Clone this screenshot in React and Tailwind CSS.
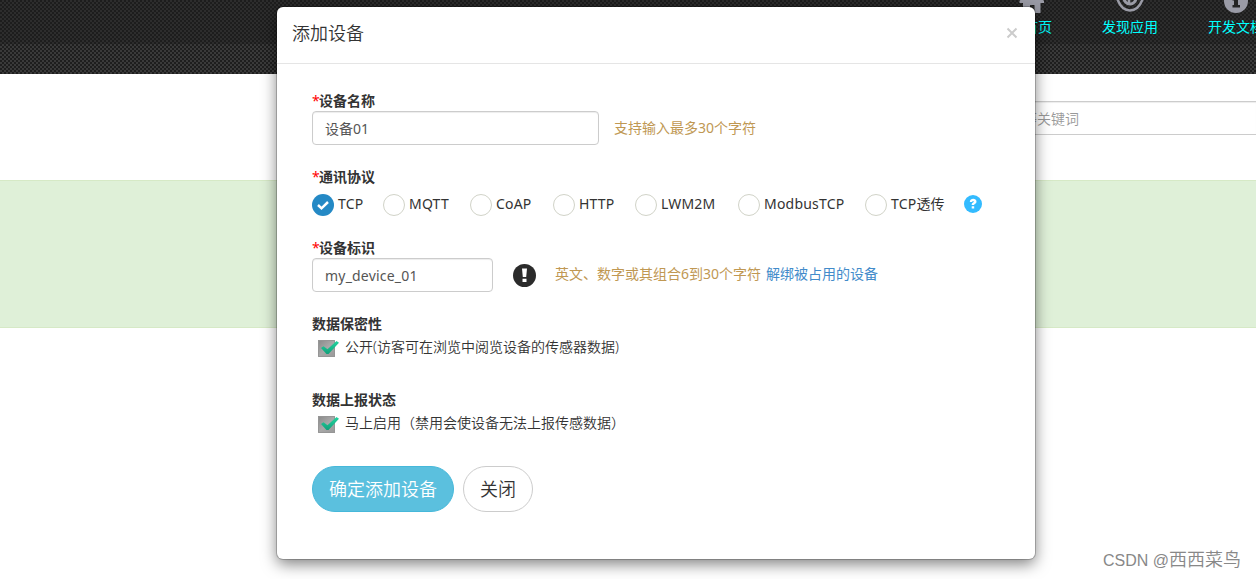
import React from "react";

const protocols = [
  { name: "TCP", width: "w-[71px]", checked: true },
  { name: "MQTT", width: "w-[87px]" },
  { name: "CoAP", width: "w-[83px]" },
  { name: "HTTP", width: "w-[82px]" },
  { name: "LWM2M", width: "w-[103px]" },
  { name: "ModbusTCP", width: "w-[127px]" },
  { name: "TCP透传", width: "w-[99px]" },
];

function HomeIcon() {
  return (
    <svg className="relative left-[8px]" width="28" height="28" viewBox="0 0 28 28" fill="#9a9ba6">
      <path d="M14 2 26 16v2H22.500V28H16.500V20H12V28H5V18H1.500v-2Z" />
    </svg>
  );
}

function EyeIcon() {
  return (
    <svg width="28" height="28" viewBox="0 0 28 28" fill="none" stroke="#9a9ba6">
      <path d="M1.500 14.500C6 5 22 5 26.500 14.500C21 29 7 29 1.500 14.500Z" strokeWidth="2.500" />
      <path d="M8 13a6 6 0 0 0 12 0" strokeWidth="3" />
      <path d="M13 14v4" strokeWidth="2.500" />
    </svg>
  );
}

function InfoIcon() {
  return (
    <svg width="24" height="28" viewBox="0 0 24 28">
      <circle cx="12" cy="16" r="12" fill="#9a9ba6" />
      <path d="M10 8h4v3h-4zM8.500 13H14v7h2v2.500H8.500V20H10v-4.500H8.500z" fill="#242424" />
    </svg>
  );
}

function NavItem({ icon, label }) {
  return (
    <div className="flex w-[106px] shrink-0 flex-col items-center">
      <div className="-mt-[15px] h-[32px]">{icon}</div>
      <span className="whitespace-nowrap font-normal leading-5 text-[#00ffff]">{label}</span>
    </div>
  );
}

function Label({ required, children }) {
  return (
    <div className="flex h-5 text-sm font-bold leading-5 text-[#333]">
      {required && <span className="w-[7px] font-normal text-[#f00]">*</span>}
      <span>{children}</span>
    </div>
  );
}

function Radio({ name, width, checked }) {
  return (
    <label className={`flex h-[22px] shrink-0 items-center ${width}`}>
      {checked ? (
        <svg className="shrink-0" width="22" height="22" viewBox="0 0 22 22">
          <circle cx="11" cy="11" r="11" fill="#2489c5" />
          <path d="m6 11 3.500 3.300L16 8" fill="none" stroke="#fff" strokeWidth="2.500" />
        </svg>
      ) : (
        <span className="size-[22px] shrink-0 rounded-full border border-[#d1d3c8] bg-white" />
      )}
      <span className="mb-[2px] ml-[4px] whitespace-nowrap font-normal tracking-[0.2px]">{name}</span>
    </label>
  );
}

function CheckRow({ children }) {
  return (
    <label className="flex h-[28px] items-center pl-[6px]">
      <svg className="mt-px" width="22" height="18" viewBox="0 0 22 18">
        <defs>
          <linearGradient id="box" x1="0" y1="0" x2="1" y2="1">
            <stop offset="0" stopColor="#888" />
            <stop offset="0.500" stopColor="#a8a8a8" />
            <stop offset="1" stopColor="#999" />
          </linearGradient>
          <linearGradient id="tick" x1="0" y1="0" x2="0" y2="1">
            <stop offset="0" stopColor="#22d6a0" />
            <stop offset="1" stopColor="#12a07a" />
          </linearGradient>
        </defs>
        <path d="M0 0h17v17H0z" fill="url(#box)" />
        <path d="M.5.5h16v16H.5z" fill="none" stroke="#969696" />
        <path d="M3 8 5.500 6.300l4 3L18.500 1l2.500 1.700L10.500 14h-2z" fill="url(#tick)" />
      </svg>
      <span className="mb-[2px] ml-[5px]">{children}</span>
    </label>
  );
}

function Dialog() {
  return (
    <section className="absolute left-[277px] top-[7px] flex h-[552px] w-[758px] flex-col rounded-md bg-white shadow-[0_0_0_1px_rgba(0,0,0,0.2),0_5px_15px_rgba(0,0,0,0.5)]">
      <header className="flex h-[57px] shrink-0 items-center justify-between border-b border-[#e5e5e5] pl-[15px] pr-[17px]">
        <h4 className="mb-[4px] text-lg font-[350] leading-[26px] text-[#333]">添加设备</h4>
        <svg className="mt-[-5px]" width="12" height="12" viewBox="0 0 12 12">
          <path d="m1.500 1.500 9 9m0-9-9 9" stroke="#ccc" strokeWidth="2" />
        </svg>
      </header>
      <div className="flex flex-col px-[35px] pt-[27px]">
        <Label required>设备名称</Label>
        <div className="flex h-[34px] items-center">
          <div className="flex h-[34px] w-[287px] items-center rounded border border-[#ccc] px-3 pt-px font-normal text-[#555] shadow-[inset_0_1px_1px_rgba(0,0,0,0.075)]">
            设备01
          </div>
          <span className="ml-[15px] font-normal text-[#c09853]">支持输入最多30个字符</span>
        </div>

        <div className="mt-[22px]">
          <Label required>通讯协议</Label>
          <div className="mt-[7px] flex h-[22px] items-center">
            {protocols.map((p) => (
              <Radio key={p.name} {...p} />
            ))}
            <svg className="mb-[2px]" width="18" height="18" viewBox="0 0 18 18">
              <circle cx="9" cy="9" r="9" fill="#33bbff" />
              <path d="M5.800 7C5.800 2.800 12.500 3 12.500 6.500c0 2.500-2.300 2-2.300 3.500H7.700C7.700 7.500 9.800 7.700 9.800 6.600 9.800 5.600 8.300 5.800 8.200 7zM7.700 11.200h2.500v2.300H7.700z" fill="#fff" />
            </svg>
          </div>
        </div>

        <div className="mt-[22px]">
          <Label required>设备标识</Label>
          <div className="flex h-[34px] items-center">
            <div className="flex h-[34px] w-[181px] items-center rounded border border-[#ccc] px-3 pt-px font-normal tracking-[0.2px] text-[#555] shadow-[inset_0_1px_1px_rgba(0,0,0,0.075)]">
              my_device_01
            </div>
            <svg className="ml-5" width="23" height="23" viewBox="0 0 23 23">
              <circle cx="11.500" cy="11.500" r="11.500" fill="#2b2b2b" />
              <path d="M9 4.500h5l-.8 8.500H9.800zM9.500 14.700h4v3.300h-4z" fill="#fff" />
            </svg>
            <span className="mb-[2px] ml-[19px] font-normal text-[#c09853]">英文、数字或其组合6到30个字符</span>
            <span className="mb-[2px] ml-[5px] font-normal text-[#428bca]">解绑被占用的设备</span>
          </div>
        </div>

        <div className="mt-[22px]">
          <Label>数据保密性</Label>
          <CheckRow>公开(访客可在浏览中阅览设备的传感器数据)</CheckRow>
        </div>
        <div className="mt-[28px]">
          <Label>数据上报状态</Label>
          <CheckRow>马上启用（禁用会使设备无法上报传感数据）</CheckRow>
        </div>

        <div className="mt-[28px] flex gap-[9px] text-lg">
          <button className="h-[46px] w-[142px] rounded-full border border-[#46b8da] bg-[#5bc0de] text-white">
            确定添加设备
          </button>
          <button className="h-[46px] w-[70px] rounded-full border border-[#ccc] bg-white text-[#333]">
            关闭
          </button>
        </div>
      </div>
    </section>
  );
}

export default function App() {
  return (
    <div className="relative h-[579px] w-[1256px] overflow-hidden bg-white font-['Noto_Sans','Noto_Sans_CJK_SC',sans-serif] text-sm font-[350] leading-5 text-[#333]">
      <div className="h-[74px] overflow-hidden bg-[conic-gradient(#3a3a3a_25%,#1e1e1e_0_50%,#3a3a3a_0_75%,#1e1e1e_0)] bg-[length:4px_4px]">
        <nav className="flex h-[44px] bg-[#1b1b1b]/40 pl-[971px]">
          <NavItem icon={<HomeIcon />} label="网站首页" />
          <NavItem icon={<EyeIcon />} label="发现应用" />
          <NavItem icon={<InfoIcon />} label="开发文档" />
        </nav>
      </div>
      <div className="flex h-[106px] justify-end pt-[27px]">
        <div className="flex h-[34px] w-[300px] items-center border-y border-[#ccc] pl-[11px] pt-[2px] text-[#999] shadow-[inset_0_1px_1px_rgba(0,0,0,0.075)]">
          输入设备等关键词
        </div>
      </div>
      <div className="h-[148px] border-y border-[#d6e9c6] bg-[#dff0d8]" />
      <Dialog />
      <div className="absolute bottom-[6px] right-[15px] flex items-baseline font-['Liberation_Sans','Noto_Sans_CJK_SC',sans-serif] text-[18px] leading-6 text-[#888]">
        <span className="whitespace-pre text-[16px]">CSDN @</span>
        <span>西西菜鸟</span>
      </div>
    </div>
  );
}
